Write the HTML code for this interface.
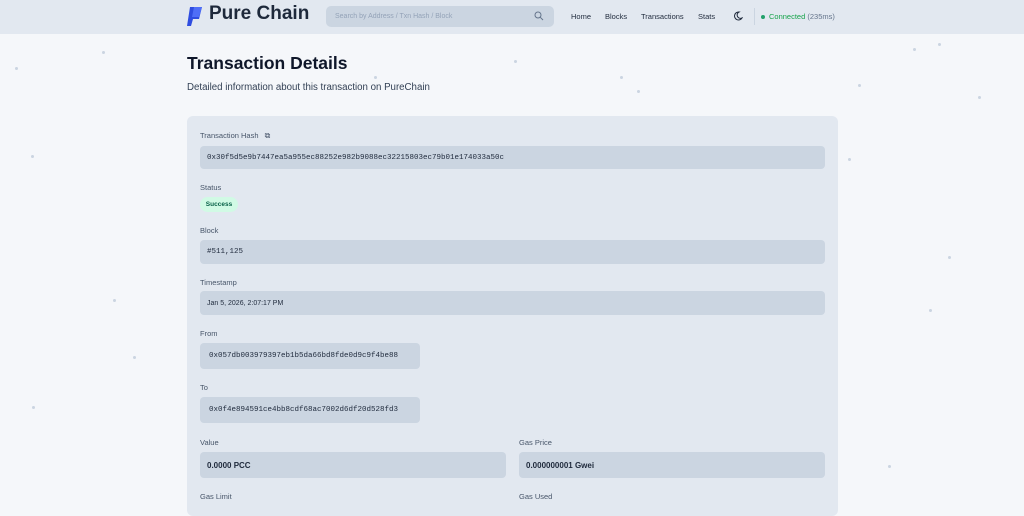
<!DOCTYPE html>
<html><head><meta charset="utf-8"><style>
*{box-sizing:border-box;margin:0;padding:0}
body{width:1024px;height:505px;overflow:hidden;background:#f5f7fa;font-family:"Liberation Sans",sans-serif;color:#0f172a;position:relative}
.hdr{position:absolute;left:0;top:0;width:1024px;height:34px;background:#e2e8f0}
.abs{position:absolute}
.lbl{position:absolute;left:200px;font-size:7.5px;color:#475569}
.fld{position:absolute;background:#cbd5e1;border-radius:4px;font-size:7.5px;color:#1e293b;display:flex;align-items:center;padding-left:7px}
.mono{font-family:"Liberation Mono",monospace;font-size:7.5px}
.nav{font-size:7.5px;color:#1e293b;top:12px}
.dot{position:absolute;width:3px;height:3px;border-radius:50%;background:#cbd5e1}
</style></head><body>
<div class="dot" style="left:102px;top:51px"></div><div class="dot" style="left:15px;top:67px"></div><div class="dot" style="left:31px;top:155px"></div><div class="dot" style="left:113px;top:299px"></div><div class="dot" style="left:133px;top:356px"></div><div class="dot" style="left:32px;top:406px"></div><div class="dot" style="left:913px;top:48px"></div><div class="dot" style="left:938px;top:43px"></div><div class="dot" style="left:978px;top:96px"></div><div class="dot" style="left:858px;top:84px"></div><div class="dot" style="left:948px;top:256px"></div><div class="dot" style="left:929px;top:309px"></div><div class="dot" style="left:888px;top:465px"></div><div class="dot" style="left:620px;top:76px"></div><div class="dot" style="left:637px;top:90px"></div><div class="dot" style="left:514px;top:60px"></div><div class="dot" style="left:374px;top:76px"></div><div class="dot" style="left:848px;top:158px"></div>
<div class="hdr"></div>
<svg class="abs" style="left:186px;top:6px" width="22" height="21" viewBox="0 0 22 21"><path d="M4 1h12l-3 12H7l-2 7H1z" fill="#2f4de0"/><path d="M8 1h8l-3 10H6z" fill="#4f6ef7"/></svg>
<div class="abs" style="left:209px;top:3px;font-size:19px;font-weight:bold;color:#1e293b">Pure Chain</div>
<div class="abs" style="left:326px;top:6px;width:228px;height:21px;background:#cbd5e1;border-radius:5px;font-size:7px;color:#94a3b8;padding:7px 9px">Search by Address / Txn Hash / Block</div>
<svg class="abs" style="left:534px;top:11px" width="10" height="10" viewBox="0 0 10 10"><circle cx="4" cy="4" r="3" fill="none" stroke="#64748b" stroke-width="1"/><path d="M6.3 6.3L9 9" stroke="#64748b" stroke-width="1"/></svg>
<div class="abs nav" style="left:571px">Home</div>
<div class="abs nav" style="left:605px">Blocks</div>
<div class="abs nav" style="left:641px">Transactions</div>
<div class="abs nav" style="left:698px">Stats</div>
<svg class="abs" style="left:733px;top:11px" width="10" height="10" viewBox="0 0 10 10"><path d="M6 1A4 4 0 1 0 9 7 3.2 3.2 0 0 1 6 1z" fill="none" stroke="#1e293b" stroke-width="1"/></svg>
<div class="abs" style="left:754px;top:8px;width:1px;height:17px;background:#cbd5e1"></div>
<div class="abs" style="left:761px;top:15px;width:4px;height:4px;border-radius:50%;background:#22a06b"></div>
<div class="abs" style="left:769px;top:12px;font-size:7.5px;color:#16a34a">Connected <span style="color:#64748b">(235ms)</span></div>
<div class="abs" style="left:187px;top:53px;font-size:17.5px;font-weight:bold;color:#0f172a">Transaction Details</div>
<div class="abs" style="left:187px;top:82px;font-size:9.7px;color:#334155">Detailed information about this transaction on PureChain</div>
<div class="abs" style="left:187px;top:116px;width:651px;height:400px;background:#e2e8f0;border-radius:6px"></div>
<div class="lbl" style="top:131px">Transaction Hash <span style="font-size:8px;margin-left:4px">⧉</span></div>
<div class="fld mono" style="left:200px;top:146px;width:625px;height:23px">0x30f5d5e9b7447ea5a955ec88252e982b9088ec32215803ec79b01e174033a50c</div>
<div class="lbl" style="top:183px">Status</div>
<div class="abs" style="left:200px;top:197px;width:38px;height:15px;background:#d1fae5;border-radius:8px;font-size:6.5px;font-weight:bold;color:#065f46;text-align:center;line-height:15px">Success</div>
<div class="lbl" style="top:226px">Block</div>
<div class="fld mono" style="left:200px;top:240px;width:625px;height:24px">#511,125</div>
<div class="lbl" style="top:278px">Timestamp</div>
<div class="fld" style="left:200px;top:291px;width:625px;height:24px;font-size:7px">Jan 5, 2026, 2:07:17 PM</div>
<div class="lbl" style="top:329px">From</div>
<div class="fld mono" style="left:200px;top:343px;width:220px;height:26px;padding-left:9px">0x057db003979397eb1b5da66bd8fde0d9c9f4be88</div>
<div class="lbl" style="top:383px">To</div>
<div class="fld mono" style="left:200px;top:397px;width:220px;height:26px;padding-left:9px">0x0f4e894591ce4bb8cdf68ac7002d6df20d528fd3</div>
<div class="lbl" style="top:438px">Value</div>
<div class="fld" style="left:200px;top:452px;width:306px;height:26px;font-size:8px;font-weight:bold">0.0000 PCC</div>
<div class="lbl" style="top:438px;left:519px">Gas Price</div>
<div class="fld" style="left:519px;top:452px;width:306px;height:26px;font-size:8px;font-weight:bold">0.000000001 Gwei</div>
<div class="lbl" style="top:492px">Gas Limit</div>
<div class="lbl" style="top:492px;left:519px">Gas Used</div>
</body></html>
